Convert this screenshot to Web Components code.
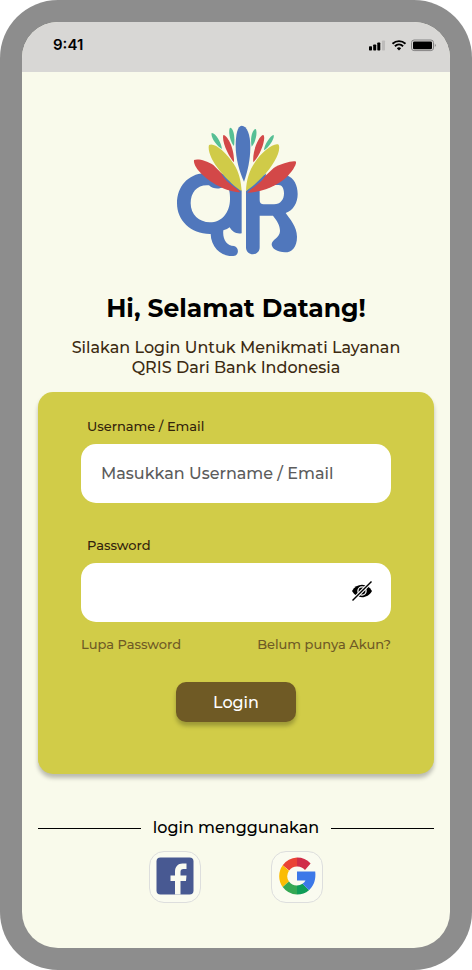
<!DOCTYPE html>
<html lang="id">
<head>
<meta charset="utf-8">
<meta name="viewport" content="width=device-width, initial-scale=1">
<title>Login QRIS</title>
<style>
  body { margin: 0; background: #fff; font-family: Montserrat, Inter, "Liberation Sans", sans-serif; font-weight: 500; color: #000; }
</style>
</head>
<body>
<phone-frame>
  <status-bar slot="status">9:41</status-bar>
  <qris-logo></qris-logo>
  <welcome-text>
    <span slot="title">Hi, Selamat Datang!</span>
    Silakan Login Untuk Menikmati Layanan QRIS Dari Bank Indonesia
  </welcome-text>
  <login-card></login-card>
  <text-divider>login menggunakan</text-divider>
  <social-login></social-login>
</phone-frame>

<script>
const define = (name, html, setup) => {
  const template = document.createElement('template');
  template.innerHTML = '<style>*{box-sizing:border-box}:host{display:block}</style>' + html;
  customElements.define(name, class extends HTMLElement {
    constructor() {
      super();
      this.attachShadow({ mode: 'open' }).append(template.content.cloneNode(true));
      if (setup) setup(this);
    }
  });
};

define('phone-frame', `
<style>
  :host { min-height: 100vh; box-sizing: border-box; padding: 22px; background: #8d8d8d; border-radius: 58px; display: flex; flex-direction: column; }
  .screen { flex: 1; background: #f9faeb; border-radius: 36px; overflow: hidden; display: flex; flex-direction: column; }
  main { flex: 1; padding: 53px 16px 40px; display: flex; flex-direction: column; }
</style>
<div class="screen"><slot name="status"></slot><main><slot></slot></main></div>`);

define('status-bar', `
<style>
  :host { background: #d8d7d5; }
  .bar { height: 50px; padding: 0 14px 4px 31px; display: flex; align-items: center; justify-content: space-between; font: 600 15px/20px Inter, sans-serif; }
  svg { display: block; }
</style>
<div class="bar"><slot></slot>
<svg width="68" height="13" viewBox="0 0 68 13" aria-hidden="true">
  <rect x="1" y="7.300" width="3" height="4.200" rx=".7"/><rect x="5.200" y="5.500" width="3" height="6" rx=".7"/><rect x="9.300" y="3.500" width="3" height="8" rx=".7"/><rect x="14" y="1.500" width="3" height="10" rx=".7" fill="#bdbcbb"/>
  <g fill="none" stroke="#000" stroke-width="1.900"><path d="M24.500 4.700C28.300 1.200 33.700 1.200 37.500 4.700"/><path d="M26.900 7.200C29.300 5 32.700 5 35.100 7.200"/></g>
  <path d="M28.800 9.200Q31 7.300 33.200 9.200L31 11.500Z"/>
  <rect x="43.500" y="1" width="22" height="10.600" rx="2.600" fill="none" stroke="#858484"/><rect x="45" y="2.400" width="19" height="7.800" rx="1.300"/><path d="M66.800 4.400Q68.600 6.200 66.800 8Z" fill="#858484"/>
</svg></div>`);

define('qris-logo', `
<style>svg { display: block; margin: 0 auto; }</style>
<svg width="124" height="132" viewBox="42 45 372 396" role="img" aria-label="Logo QRIS">
  <g fill="#5077bc" fill-rule="evenodd">
    <path d="M51 280C51 230 85 192 132 190L180 190C210 196 232 218 245 242V370C229 373 216 365 209 352Q199 360 190 361C187 388 200 408 222 408C238 412 238 437 220 438C187 441 153 414 152 372C93 373 51 332 51 280ZM92 280C92 314 117 337 150 337C184 337 210 309 210 266Q210 246 206 236L190 231C178 238 158 237 147 226C112 223 92 246 92 280Z"/>
    <path d="M258 243L300 196H380C402 204 413 226 413 252C413 278 400 302 377 309C389 326 411 350 411 380C411 411 396 427 375 427C352 427 335 416 335 403C335 389 360 383 360 363C360 345 351 333 339 317H299V412C299 440 258 440 258 412ZM299 241V270Q299 283 311 283H342C362 283 372 269 372 250C372 235 366 225 356 225H343Z"/>
  </g>
  <g fill="#d34848"><path d="M102 150C111 145 139 150 160 165L241 247C201 247 148 218 120 187C109 175 100 160 102 150Z"/><path d="M408 155C410 165 395 187 378 203C346 231 299 247 262 248L341 174C363 161 398 151 408 155Z"/><path d="M190 75C200 74 224 112 222 157C209 143 184 96 190 75ZM310 75C319 82 304 132 280 157C276 122 298 75 310 75Z"/></g>
  <g fill="#5077bc"><path d="M183 190C205 205 225 220 243 243C219 232 194 211 183 190ZM319 190C313 210 285 232 261 243C278 219 297 205 319 190Z"/></g>
  <g fill="#d0cb48"><path d="M147 105C163 96 198 127 221 161C238 187 243 214 245 243C217 226 170 178 154 143C148 130 144 115 147 105ZM356 104C364 122 342 166 306 202Q283 226 258 243C259 210 268 181 284 158C306 124 343 96 356 104Z"/></g>
  <path d="M245 47C261 47 271 73 271 110C271 151 262 185 252 215C239 188 227 147 227 108C227 73 233 47 245 47Z" fill="#5077bc"/>
  <path d="M155 69C165 67 184 96 186 117C170 108 151 81 155 69ZM210 53C221 53 226 82 222 108C210 95 204 63 210 53ZM287 57C293 64 288 96 275 110C270 89 276 58 287 57ZM341 75C345 85 326 114 312 121C312 106 331 76 341 75Z" fill="#56bf94"/>
</svg>`);

define('welcome-text', `
<style>
  :host { margin-top: 31px; text-align: center; }
  h1 { margin: 0; font-size: 25px; line-height: 40px; font-weight: 700; }
  p { margin: 10px auto 0; max-width: 350px; font-size: 16px; line-height: 20px; color: #3c2a11; }
</style>
<h1><slot name="title"></slot></h1><p><slot></slot></p>`);

define('login-field', `
<style>
  label { display: block; padding-left: 6px; margin-bottom: 10px; font-size: 13px; line-height: 16px; color: #33230c; }
  .box { display: flex; align-items: center; height: 59px; background: #fff; border-radius: 15px; padding: 0 18px 0 20px; }
  input { flex: 1; min-width: 0; height: 100%; border: 0; padding: 0; outline: 0; background: none; font: inherit; font-size: 16px; }
  input::placeholder { color: #5c5c5c; opacity: 1; }
</style>
<label for="field"></label>
<div class="box"><input id="field"><slot></slot></div>`, host => {
  const input = host.shadowRoot.querySelector('input');
  host.shadowRoot.querySelector('label').textContent = host.getAttribute('label');
  input.type = host.getAttribute('type') || 'text';
  input.placeholder = host.getAttribute('placeholder') || '';
  host.addEventListener('click', e => {
    if (e.target.closest('button')) input.type = input.type === 'password' ? 'text' : 'password';
  });
});

define('login-card', `
<style>
  :host { margin-top: 14px; background: #d1cc48; border-radius: 15px; box-shadow: 0 4px 4px rgba(0,0,0,.25); }
  form { padding: 26px 43px 52px; display: flex; flex-direction: column; }
  login-field + login-field { margin-top: 34px; }
  .eye { border: 0; background: none; padding: 0 0 3px; height: 25px; display: flex; align-items: center; }
  .links { display: flex; justify-content: space-between; margin-top: 13px; }
  a { font-size: 13px; line-height: 18px; color: #6f5a25; text-decoration: none; }
  .submit { align-self: center; margin-top: 29px; width: 120px; height: 40px; border: 0; border-radius: 10px; padding: 0; background: #6f5a25; color: #fff; font: inherit; font-size: 16px; box-shadow: 0 4px 4px rgba(0,0,0,.25); }
</style>
<form>
  <login-field label="Username / Email" placeholder="Masukkan Username / Email"></login-field>
  <login-field label="Password" type="password">
    <button class="eye" type="button" aria-label="Tampilkan password">
      <svg width="22" height="22" viewBox="0 0 22 22" aria-hidden="true"><path d="M1 11C5.500 2.700 16.500 2.700 21 11C16.500 19.300 5.500 19.300 1 11Z"/><circle cx="11" cy="11" r="4.100" fill="none" stroke="#fff" stroke-width="1.300"/><path d="M1.500 20.500L20.500 1.500" stroke="#fff" stroke-width="3.600"/><path d="M1.500 20.500L20.500 1.500" stroke="#000" stroke-width="1.500"/></svg>
    </button>
  </login-field>
  <div class="links"><a href="#lupa">Lupa Password</a><a href="#daftar">Belum punya Akun?</a></div>
  <button class="submit" type="button">Login</button>
</form>`);

define('text-divider', `
<style>
  :host { display: flex; align-items: center; gap: 12px; margin-top: 43px; font-size: 16px; line-height: 22px; }
  :host::before, :host::after { content: ""; flex: 1; height: 1px; background: #000; }
</style>
<slot></slot>`);

define('social-login', `
<style>
  :host { display: flex; justify-content: center; gap: 70px; margin-top: 12px; }
  button { width: 52px; height: 52px; padding: 0 0 2px; border: 1px solid #dddedd; border-radius: 15px; background: #fafbf0; display: flex; align-items: center; justify-content: center; }
</style>
<button type="button" aria-label="Facebook">
  <svg width="38" height="38" viewBox="0 0 38 38" aria-hidden="true"><rect x=".5" y=".5" width="37" height="37" rx="4" fill="#485992"/><path d="M19 37.500V24H14.500V18.500H19V15C19 9.500 22 6.500 26.500 6.500H30.500V12H27.500C25.300 12 24.500 13 24.500 15V18.500H30.500L30 24H24.500V37.500Z" fill="#fafbf0"/></svg>
</button>
<button type="button" aria-label="Google">
  <svg width="38" height="38" viewBox="0 0 38 38" aria-hidden="true">
    <path d="M4.700 8.300A18.500 18.500 0 0 1 19 .5V9.500A9.500 9.500 0 0 0 11.200 13.600Z" fill="#ea4335"/>
    <path d="M19 .5A18.500 18.500 0 0 1 32.600 6.400L27 13A10 10 0 0 0 19 9.500Z" fill="#d02d48"/>
    <path d="M4.700 8.300A18.500 18.500 0 0 0 4.700 30L11 24.500A9.500 9.500 0 0 1 11 13.800Z" fill="#fbbc04"/>
    <path d="M4.700 30A18.500 18.500 0 0 0 19 37.500V28.500A9.500 9.500 0 0 1 11 24.500Z" fill="#34a853"/>
    <path d="M19 37.500A18.500 18.500 0 0 0 31 33.200L24.500 26.800Q22 28.500 19 28.500Z" fill="#0f9d58"/>
    <path d="M19 14.500H37.200C38.200 22.500 35.500 29.400 31 33.200L24.500 26.800Q26.600 25.400 27.500 23.500H19Z" fill="#3c78e8"/>
  </svg>
</button>`);
</script>
</body>
</html>
